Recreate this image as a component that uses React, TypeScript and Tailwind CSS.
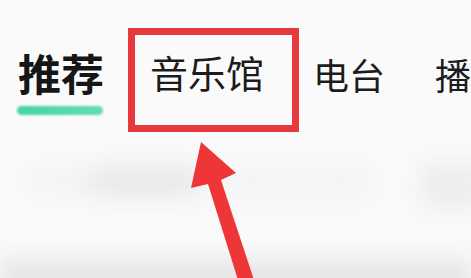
import React from "react"

const cjk = { fontFamily: '"Noto Sans CJK SC", "Noto Sans", sans-serif' }

function Arrow() {
  return (
    <svg className="absolute left-0 top-0 pointer-events-none" width="471" height="278" viewBox="0 0 471 278">
      <polygon
        points="201,142 236,173 221,180 254,280 238,280 208,184 191,188"
        fill="#ee3537"
      />
    </svg>
  )
}

export default function App() {
  return (
    <div className="relative w-[471px] h-[278px] overflow-hidden bg-[#fafafa]" style={cjk}>
      {/* top tabs */}
      <div className="flex items-start pt-[28px] pl-[18px] whitespace-nowrap">
        <div className="flex flex-col items-start mt-[23px]">
          <span className="text-[43px] leading-none font-bold text-[#161616]">推荐</span>
          <div className="mt-[12px] -ml-[1px] h-[9px] w-[86px] rounded-full bg-gradient-to-r from-[#45d4a5] to-[#62dcb4] blur-[1px]" />
        </div>
        <div className="ml-[24px] flex items-start w-[172px] h-[104px] border-[7px] border-[#e5393b] pl-[15px] pt-[18px]">
          <span className="text-[38px] leading-none text-[#1c1c1c]">音乐馆</span>
        </div>
        <span className="ml-[14px] mt-[28px] text-[36px] leading-none text-[#1c1c1c]">电台</span>
        <span className="ml-[50px] mt-[28px] text-[36px] leading-none text-[#1c1c1c]">播</span>
      </div>

      {/* blurred content below */}
      <div className="flex items-start mt-[32px] px-[30px] gap-[20px]">
        <div className="flex items-center w-[170px] h-[34px] blur-md">
          <div className="w-[60px] h-[20px] bg-[#f1f1f1]" />
          <div className="flex-1 h-[26px] bg-[#e5e5e5]" />
        </div>
        <div className="w-[150px] h-[30px] mt-[4px] bg-[#f3f3f3] blur-md" />
        <div className="ml-auto w-[60px] h-[44px] -mr-[40px] bg-[#ececec] blur-md" />
      </div>
      <div className="absolute left-0 right-0 bottom-[-18px] h-[36px] bg-[#e4e4e4] blur-md" />

      <Arrow />
    </div>
  )
}
